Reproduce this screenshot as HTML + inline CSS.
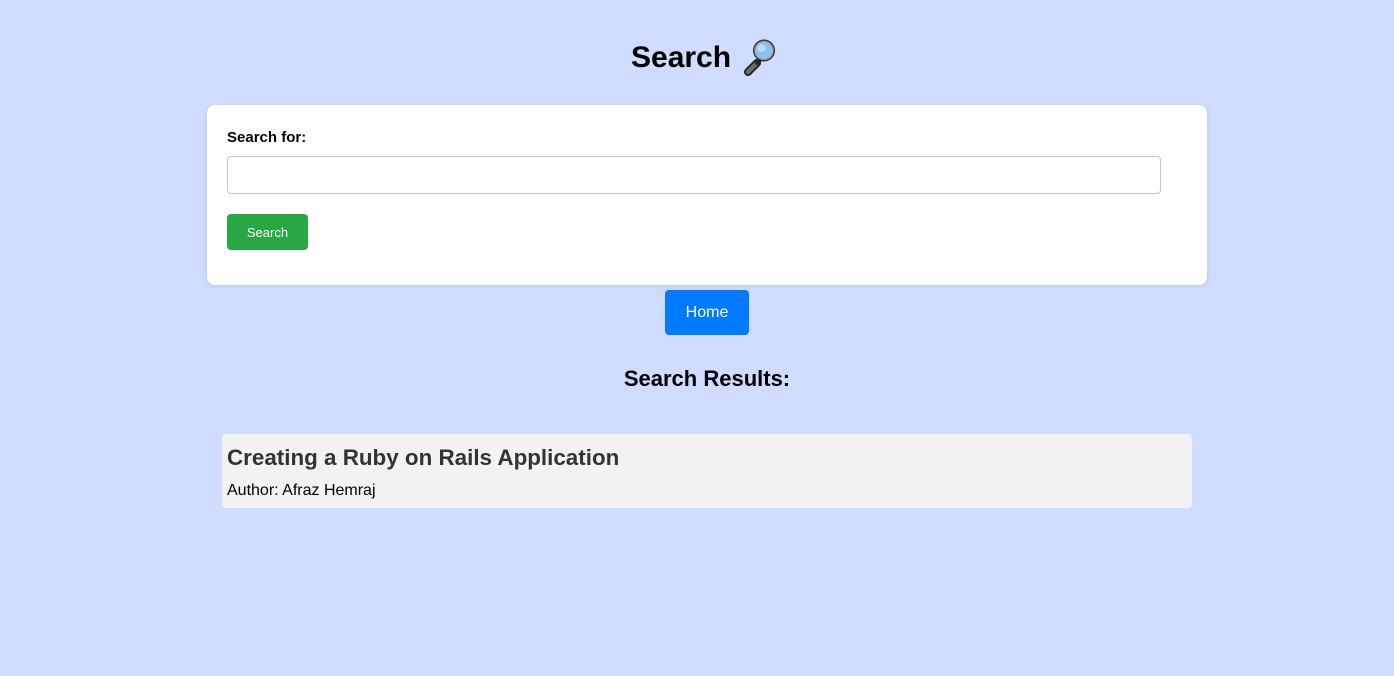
<!DOCTYPE html>
<html><head><meta charset="utf-8"><style>
body{margin:0;width:1394px;height:676px;background:#d0dcfd;font-family:"Liberation Sans",sans-serif;position:relative;overflow:hidden}
.a{position:absolute}
h1{margin:0;font-size:30px;font-weight:bold;color:#000}
</style></head><body>
<div class="a" style="left:631px;top:38px;"><h1 style="line-height:40px">Search</h1></div>
<svg class="a" style="left:742px;top:38px" width="40" height="40" viewBox="0 0 40 40">
<line x1="6" y1="34" x2="15" y2="25" stroke="#222" stroke-width="8" stroke-linecap="round"/>
<line x1="6" y1="34" x2="15" y2="25" stroke="#6b6b6b" stroke-width="4.5" stroke-linecap="round"/>
<line x1="15" y1="25" x2="18" y2="22" stroke="#222" stroke-width="4" stroke-linecap="round"/>
<circle cx="22" cy="12.5" r="11" fill="#2a2a2a"/>
<circle cx="22" cy="12.5" r="8.7" fill="#8cc3ea"/>
<circle cx="22" cy="12.5" r="9.2" fill="none" stroke="#9a9a9a" stroke-width="1.2"/>
<circle cx="19.5" cy="10" r="4" fill="#b8dcf5"/>
</svg>
<div class="a" style="left:207px;top:105px;width:1000px;height:180px;background:#fff;border-radius:8px;box-shadow:0 1px 4px rgba(0,0,0,.1)"></div>
<div class="a" style="left:227px;top:129px;font-size:15px;font-weight:bold">Search for:</div>
<div class="a" style="left:227px;top:156px;width:932px;height:36px;border:1px solid #c4c4c4;border-radius:4px;background:#fff"></div>
<div class="a" style="left:227px;top:214px;width:81px;height:36px;background:#28a745;border-radius:4px;color:#fff;font-size:13px;line-height:37px;text-align:center">Search</div>
<div class="a" style="left:665px;top:290px;width:84px;height:45px;background:#007bff;border-radius:4px;color:#fff;font-size:16px;line-height:45px;text-align:center">Home</div>
<div class="a" style="left:0;width:1394px;top:366px;text-align:center;font-size:22px;font-weight:bold;line-height:26px;padding-left:20px;box-sizing:border-box">Search Results:</div>
<div class="a" style="left:222px;top:434px;width:970px;height:74px;background:#f2f2f2;border-radius:4px"></div>
<div class="a" style="left:227px;top:443px;font-size:22.4px;font-weight:bold;color:#333;line-height:30px">Creating a Ruby on Rails Application</div>
<div class="a" style="left:227px;top:481px;font-size:16px;color:#000;line-height:20px">Author: Afraz Hemraj</div>
</body></html>
